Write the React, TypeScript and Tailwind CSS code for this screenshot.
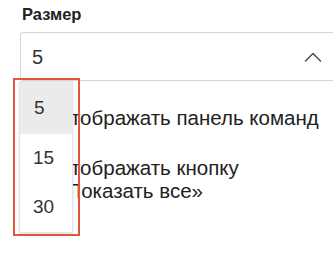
// Settings panel with the "Размер" select opened; the options list is
// outlined in red as an annotation.

const SIZES = [5, 15, 30];

function ChevronUp() {
  return (
    <svg width="18" height="10" viewBox="0 0 18 10" fill="none" className="text-[#4d4d4d]">
      <path d="M1.5 9 L9 1.5 L16.5 9" stroke="currentColor" strokeWidth="1.5" strokeLinecap="round" strokeLinejoin="round" />
    </svg>
  );
}

function CheckRow({ children }: { children: React.ReactNode }) {
  return (
    <div className="flex items-start">
      <div className="mr-[11px] mt-[1px] h-[22px] w-[22px] shrink-0 rounded-[4px] border border-[#bdbdbd]" />
      <span className="text-[20.5px] leading-[23px] text-[#222]">{children}</span>
    </div>
  );
}

export default function App() {
  const selected = 5;
  return (
    <div className="relative h-[257px] w-[333px] overflow-hidden bg-white font-['Liberation_Sans',Arial,sans-serif]">
      <div className="pl-5 pt-[4px]">
        <div className="pl-[2px] text-[16.5px] font-bold leading-[20px] text-[#222]">Размер</div>
        <div className="mt-[8px] flex h-[49px] w-[320px] items-center justify-between rounded-[3px] border border-[#d6d6d6] pl-[11px] pr-[17px]">
          <span className="text-[20px] text-[#333]">5</span>
          <ChevronUp />
        </div>

        <div className="mt-[25px] flex w-[320px] flex-col gap-[27px] pl-[2px]">
          <CheckRow>Отображать панель команд</CheckRow>
          <CheckRow>Отображать кнопку «Показать все»</CheckRow>
        </div>
      </div>

      {/* open options list */}
      <div className="absolute left-[19px] top-[81px] w-[54px] border border-[#e2e6ec] bg-white shadow-sm">
        {SIZES.map((n) => (
          <div
            key={n}
            className={
              n === selected
                ? "flex h-[52px] items-center bg-[#ebebeb] pl-[14px] text-[19px] text-[#333]"
                : "flex h-[49px] items-center pl-[13px] text-[19px] text-[#333]"
            }
          >
            {n}
          </div>
        ))}
      </div>

      {/* annotation outline */}
      <div className="absolute left-[13px] top-[78px] h-[158px] w-[67px] border-2 border-[#e2553f]" />
    </div>
  );
}
